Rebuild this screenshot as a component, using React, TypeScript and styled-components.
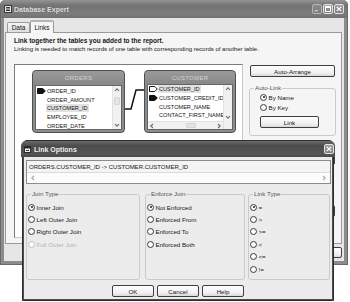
import React from "react";
import styled, { createGlobalStyle, css } from "styled-components";

const GlobalStyle = createGlobalStyle`
  html, body { margin: 0; padding: 0; background: #fff; }
  body { font-family: "Liberation Sans", Arial, sans-serif; font-size: 6.5px; color: #151515; }
  * { box-sizing: border-box; }
`;

const Stage = styled.div`
  position: relative;
  width: 350px;
  height: 302px;
  overflow: hidden;
  background: #fff;
`;

/* ---------- outer window ---------- */

const Window = styled.div`
  width: 348px;
  height: 265px;
  display: flex;
  flex-direction: column;
  background: #8c8c8c;
  padding: 0 3px 3px;
  border-radius: 5px 5px 0 0;
  border: 1px solid #6a6a6a;
  border-top: none;
`;

const TitleBar = styled.div<{ $active?: boolean }>`
  display: flex;
  align-items: center;
  gap: ${p => (p.$active ? 3 : 2)}px;
  margin: 0 -3px;
  padding: 0 ${p => (p.$active ? 1 : 3)}px 0 3px;
  height: ${p => (p.$active ? 16 : 18)}px;
  font-weight: bold;
  font-size: 7px;
  border-radius: 5px 5px 0 0;
  ${p =>
    p.$active
      ? css`
          color: #f6f6f6;
          background: linear-gradient(#6a6a6a, #4c4c4c 30%, #555 80%, #4a4a4a);
        `
      : css`
          color: #e2e2e2;
          background: linear-gradient(#949494, #747474 30%, #7c7c7c 80%, #707070);
        `}
`;

const TitleText = styled.span`
  flex: 1;
  white-space: nowrap;
  text-shadow: 0 0 1px rgba(0, 0, 0, 0.4);
`;

const CapButton = styled.div<{ $dim?: boolean }>`
  width: 10px;
  height: 10px;
  border: 1px solid #e4e4e4;
  border-radius: 2px;
  background: linear-gradient(#a0a0a0, #7c7c7c);
  display: flex;
  align-items: center;
  justify-content: center;
  opacity: ${p => (p.$dim ? 0.55 : 1)};
  & + & { margin-left: -1px; }
`;

const WinBody = styled.div`
  flex: 1;
  display: flex;
  flex-direction: column;
  background: #e6e6e6;
  padding: 2px 2px 0 1px;
`;

const TabRow = styled.div`
  display: flex;
  align-items: flex-end;
  height: 12px;
  margin-left: 2px;
  position: relative;
  z-index: 1;
`;

const Tab = styled.div<{ $active?: boolean }>`
  display: flex;
  align-items: center;
  justify-content: center;
  border: 1px solid #9a9a9a;
  border-bottom: none;
  border-radius: 2px 2px 0 0;
  font-size: 6.5px;
  ${p =>
    p.$active
      ? css`
          width: 24px;
          height: 13px;
          margin-bottom: -1px;
          background: #f6f6f6;
          border-top: 2px solid #b4b4b4;
        `
      : css`
          width: 23px;
          height: 10px;
          background: linear-gradient(#f4f4f4, #dedede);
        `}
`;

const TabPanel = styled.div`
  height: 212px;
  border: 1px solid #9a9a9a;
  background: #f5f5f5;
  padding: 3px 5px 0 8px;
  display: flex;
  flex-direction: column;
`;

const Intro = styled.div<{ $bold?: boolean }>`
  line-height: 9px;
  white-space: nowrap;
  font-weight: ${p => (p.$bold ? "bold" : "normal")};
  font-size: ${p => (p.$bold ? 6.5 : 6)}px;
`;

const MainRow = styled.div`
  display: flex;
  gap: 6px;
  margin-top: 10px;
`;

const Canvas = styled.div`
  position: relative;
  width: 232px;
  height: 174px;
  background: #fff;
  border: 1px solid #7c7c7c;
  border-right-color: #c8c8c8;
  border-bottom-color: #c8c8c8;
`;

const RightCol = styled.div`
  width: 87px;
  display: flex;
  flex-direction: column;
  padding-top: 1px;
`;

const Button = styled.div<{ $w: number; $h?: number; $mt?: number; $ml?: number }>`
  width: ${p => p.$w}px;
  height: ${p => p.$h ?? 12}px;
  margin-top: ${p => p.$mt ?? 0}px;
  margin-left: ${p => p.$ml ?? 0}px;
  border: 1px solid #3e3e3e;
  border-radius: 2px;
  background: linear-gradient(#fefefe, #f0f0f0 70%, #d8d8d8);
  display: flex;
  align-items: center;
  justify-content: center;
  font-size: 6.2px;
  white-space: nowrap;
  flex-shrink: 0;
`;

const Group = styled.fieldset<{ $w: number; $h: number; $ml?: number; $mt?: number; $pt?: number }>`
  width: ${p => p.$w}px;
  height: ${p => p.$h}px;
  margin: ${p => p.$mt ?? 0}px 0 0 ${p => p.$ml ?? 0}px;
  padding: ${p => p.$pt ?? 3}px 2px 0 1px;
  border: 1px solid #cacaca;
  border-radius: 3px;
  min-width: 0;
  flex-shrink: 0;
`;

const Legend = styled.legend`
  padding: 0 1px;
  margin-left: 3px;
  line-height: 8px;
  font-size: 6.2px;
  color: #555;
`;

const Indent = styled.div`
  padding-left: 9px;
`;

const RadioRow = styled.div<{ $h?: number; $disabled?: boolean }>`
  display: flex;
  align-items: center;
  height: ${p => p.$h ?? 12.4}px;
  line-height: 7px;
  white-space: nowrap;
  font-size: 6.2px;
  color: ${p => (p.$disabled ? "#b4b4b4" : "#151515")};
`;

const Dot = styled.span<{ $checked?: boolean; $disabled?: boolean }>`
  width: 7px;
  height: 7px;
  border-radius: 50%;
  border: 1px solid ${p => (p.$disabled ? "#c4c4c4" : "#404040")};
  background: radial-gradient(circle, #fff 40%, #e6e6e6);
  margin-right: 1.5px;
  position: relative;
  flex-shrink: 0;
  ${p =>
    p.$checked &&
    css`
      &::after {
        content: "";
        position: absolute;
        left: 1.5px;
        top: 1.5px;
        width: 2px;
        height: 2px;
        border-radius: 50%;
        background: #222;
      }
    `}
`;

const BottomRow = styled.div`
  display: flex;
  justify-content: flex-end;
  gap: 4px;
  margin-top: 3px;
`;

/* ---------- table nodes on the link canvas ---------- */

const Node = styled.div<{ $x: number; $w: number }>`
  position: absolute;
  left: ${p => p.$x}px;
  top: 5px;
  width: ${p => p.$w}px;
  height: 63px;
  border: 1px solid #505050;
  border-radius: 4px;
  background: linear-gradient(#9a9a9a, #8a8a8a 20%, #8c8c8c);
  display: flex;
  flex-direction: column;
  padding: 0 2px 2px;
`;

const NodeHead = styled.div<{ $h: number }>`
  height: ${p => p.$h}px;
  display: flex;
  align-items: center;
  justify-content: center;
  color: #d4d4d4;
  font-size: 6px;
  letter-spacing: 0.3px;
`;

const NodeBody = styled.div<{ $hscroll?: boolean }>`
  flex: 1;
  display: grid;
  grid-template-columns: 1fr 9px;
  grid-template-rows: ${p => (p.$hscroll ? "1fr 8px" : "1fr")};
  background: #fff;
  border: 1px solid #666;
  overflow: hidden;
  min-height: 0;
`;

const FieldList = styled.div<{ $pt: number }>`
  padding-top: ${p => p.$pt}px;
  overflow: hidden;
`;

const Field = styled.div`
  display: flex;
  align-items: center;
  height: 8.7px;
  font-size: 5.6px;
  white-space: nowrap;
`;

const KeySlot = styled.span`
  width: 10px;
  display: flex;
  align-items: center;
  padding-left: 0.5px;
  flex-shrink: 0;
`;

const FieldName = styled.span<{ $sel?: boolean }>`
  padding: 0 1px;
  line-height: 8px;
  background: ${p => (p.$sel ? "#e2e2e2" : "transparent")};
`;

const VScroll = styled.div`
  display: flex;
  flex-direction: column;
  background: #f1f1f1;
  border-left: 1px solid #e2e2e2;
`;

const HScroll = styled.div`
  display: flex;
  align-items: stretch;
  background: #f1f1f1;
  border-top: 1px solid #e2e2e2;
`;

const ArrowBtn = styled.div`
  width: 8px;
  height: 8px;
  display: flex;
  align-items: center;
  justify-content: center;
  flex-shrink: 0;
`;

const Thumb = styled.div<{ $horizontal?: boolean }>`
  ${p =>
    p.$horizontal
      ? css`
          width: 10px;
          margin: 1px 0 1px 30px;
        `
      : css`
          height: 8px;
          margin: 3px 1px 0;
        `}
  border: 1px solid #d4d4d4;
  border-radius: 1px;
  background: #e4e4e4;
`;

const Spacer = styled.div`
  flex: 1;
`;

const Link = styled.svg`
  position: absolute;
  left: 0;
  top: 0;
  pointer-events: none;
`;

/* ---------- Link Options dialog ---------- */

const Dialog = styled.div`
  position: absolute;
  left: 22px;
  top: 140px;
  width: 312px;
  height: 161px;
  border: 1px solid #2e2e2e;
  border-radius: 5px 5px 0 0;
  background: #4e4e4e;
  padding: 0 1px 1px;
  display: flex;
  flex-direction: column;
`;

const DialogBody = styled.div`
  flex: 1;
  background: #ececec;
  padding: 3px 2px 0 1px;
  display: flex;
  flex-direction: column;
`;

const ListBox = styled.div`
  width: 305px;
  height: 24px;
  margin-left: 1px;
  border: 1px solid #8c8c8c;
  display: flex;
  flex-direction: column;
  background: #f4f4f4;
`;

const ListLine = styled.div`
  height: 11px;
  padding-left: 2px;
  display: flex;
  align-items: center;
  font-size: 6px;
  white-space: nowrap;
`;

const ListScroll = styled.div`
  flex: 1;
  display: flex;
  align-items: center;
  justify-content: space-between;
  background: #fcfcfc;
  border-top: 1px solid #dadada;
  padding: 0 3px;
`;

const GroupsRow = styled.div`
  display: flex;
  margin-top: 6px;
  padding-left: 1px;
`;

const DialogButtons = styled.div`
  display: flex;
  justify-content: center;
  gap: 3px;
  margin-top: 5px;
  padding-left: 1px;
`;

/* ---------- small drawings ---------- */

const Chevron = ({ dir, color = "#6a6a6a" }: { dir: "up" | "down" | "left" | "right"; color?: string }) => {
  const pts = {
    up: "1,4 3,1.8 5,4",
    down: "1,2 3,4.2 5,2",
    left: "4,1 1.8,3 4,5",
    right: "2,1 4.2,3 2,5",
  }[dir];
  return (
    <svg width="6" height="6" viewBox="0 0 6 6">
      <polyline points={pts} fill="none" stroke={color} strokeWidth="1.1" />
    </svg>
  );
};

const KeyTag = ({ hollow }: { hollow?: boolean }) => (
  <svg width="9" height="6" viewBox="0 0 9 6">
    <polygon
      points="0.5,0.5 5.8,0.5 8.3,3 5.8,5.5 0.5,5.5"
      fill={hollow ? "#fff" : "#111"}
      stroke="#111"
      strokeWidth="1"
    />
  </svg>
);

const AppIcon = () => (
  <svg width="8" height="8" viewBox="0 0 8 8">
    <rect x="0.5" y="0.5" width="7" height="7" fill="#e8e8e8" stroke="#3a3a3a" />
    <rect x="2" y="2" width="4" height="1.5" fill="#3a3a3a" />
    <rect x="2" y="4.5" width="4" height="1.5" fill="#3a3a3a" />
  </svg>
);

const DialogIcon = () => (
  <svg width="7" height="7" viewBox="0 0 7 7">
    <rect x="0.5" y="0.5" width="6" height="6" fill="#f2f2f2" stroke="#2a2a2a" />
    <rect x="0.5" y="0.5" width="6" height="2" fill="#2a2a2a" />
    <rect x="2" y="4" width="3" height="1" fill="#2a2a2a" />
  </svg>
);

const CloseGlyph = () => (
  <svg width="6" height="6" viewBox="0 0 6 6">
    <path d="M0.8 0.8 L5.2 5.2 M5.2 0.8 L0.8 5.2" stroke="#fff" strokeWidth="1.2" />
  </svg>
);

const MaxGlyph = () => (
  <svg width="6" height="6" viewBox="0 0 6 6">
    <rect x="0.5" y="0.5" width="5" height="5" fill="none" stroke="#fff" strokeWidth="1" />
    <rect x="0.5" y="0.5" width="5" height="1.5" fill="#fff" />
  </svg>
);

const MinGlyph = () => (
  <svg width="6" height="6" viewBox="0 0 6 6">
    <rect x="0.5" y="4" width="3.5" height="1.4" fill="#fff" />
  </svg>
);

/* ---------- data ---------- */

type Col = { name: string; key?: "solid" | "hollow"; sel?: boolean };

const orders: Col[] = [
  { name: "ORDER_ID", key: "solid" },
  { name: "ORDER_AMOUNT" },
  { name: "CUSTOMER_ID", sel: true },
  { name: "EMPLOYEE_ID" },
  { name: "ORDER_DATE" },
];

const customer: Col[] = [
  { name: "CUSTOMER_ID", key: "hollow", sel: true },
  { name: "CUSTOMER_CREDIT_ID", key: "solid" },
  { name: "CUSTOMER_NAME" },
  { name: "CONTACT_FIRST_NAME" },
];

type Opt = { label: string; checked?: boolean; disabled?: boolean };

const joinTypes: Opt[] = [
  { label: "Inner Join", checked: true },
  { label: "Left Outer Join" },
  { label: "Right Outer Join" },
  { label: "Full Outer Join", disabled: true },
];

const enforce: Opt[] = [
  { label: "Not Enforced", checked: true },
  { label: "Enforced From" },
  { label: "Enforced To" },
  { label: "Enforced Both" },
];

const linkTypes: Opt[] = [
  { label: "=", checked: true },
  { label: ">" },
  { label: ">=" },
  { label: "<" },
  { label: "<=" },
  { label: "!=" },
];

const RadioList = ({ items, h }: { items: Opt[]; h?: number }) => (
  <>
    {items.map(o => (
      <RadioRow key={o.label} $h={h} $disabled={o.disabled}>
        <Dot $checked={o.checked} $disabled={o.disabled} />
        {o.label}
      </RadioRow>
    ))}
  </>
);

const Fields = ({ cols, pt }: { cols: Col[]; pt: number }) => (
  <FieldList $pt={pt}>
    {cols.map(c => (
      <Field key={c.name}>
        <KeySlot>{c.key && <KeyTag hollow={c.key === "hollow"} />}</KeySlot>
        <FieldName $sel={c.sel}>{c.name}</FieldName>
      </Field>
    ))}
  </FieldList>
);

export default function App() {
  return (
    <Stage>
      <GlobalStyle />
      <Window>
        <TitleBar>
          <AppIcon />
          <TitleText>Database Expert</TitleText>
          <CapButton $dim>
            <MinGlyph />
          </CapButton>
          <CapButton>
            <MaxGlyph />
          </CapButton>
          <CapButton>
            <CloseGlyph />
          </CapButton>
        </TitleBar>
        <WinBody>
          <TabRow>
            <Tab>Data</Tab>
            <Tab $active>Links</Tab>
          </TabRow>
          <TabPanel>
            <Intro $bold>Link together the tables you added to the report.</Intro>
            <Intro>
              Linking is needed to match records of one table with corresponding records of another table.
            </Intro>
            <MainRow>
              <Canvas>
                <Node $x={17} $w={93}>
                  <NodeHead $h={14}>ORDERS</NodeHead>
                  <NodeBody>
                    <Fields cols={orders} pt={0.5} />
                    <VScroll>
                      <ArrowBtn>
                        <Chevron dir="up" />
                      </ArrowBtn>
                      <Thumb />
                      <Spacer />
                      <ArrowBtn>
                        <Chevron dir="down" />
                      </ArrowBtn>
                    </VScroll>
                  </NodeBody>
                </Node>
                <Node $x={129} $w={92}>
                  <NodeHead $h={13}>CUSTOMER</NodeHead>
                  <NodeBody $hscroll>
                    <Fields cols={customer} pt={0} />
                    <VScroll>
                      <ArrowBtn>
                        <Chevron dir="up" />
                      </ArrowBtn>
                      <Spacer />
                      <ArrowBtn>
                        <Chevron dir="down" />
                      </ArrowBtn>
                    </VScroll>
                    <HScroll>
                      <ArrowBtn>
                        <Chevron dir="left" />
                      </ArrowBtn>
                      <Thumb $horizontal />
                      <Spacer />
                      <ArrowBtn>
                        <Chevron dir="right" />
                      </ArrowBtn>
                    </HScroll>
                    <VScroll />
                  </NodeBody>
                </Node>
                <Link width="232" height="172" viewBox="0 0 232 172">
                  <polyline points="110,44 116,44 121,25 129,25" fill="none" stroke="#111" strokeWidth="1.5" />
                </Link>
              </Canvas>
              <RightCol>
                <Button $w={85} $ml={1}>
                  Auto-Arrange
                </Button>
                <Group $w={87} $h={52} $mt={7} $pt={0}>
                  <Legend>Auto-Link</Legend>
                  <Indent>
                    <RadioRow $h={10.5}>
                      <Dot $checked />
                      By Name
                    </RadioRow>
                    <RadioRow $h={10.5}>
                      <Dot />
                      By Key
                    </RadioRow>
                    <Button $w={59} $h={12} $mt={3}>
                      Link
                    </Button>
                  </Indent>
                </Group>
                <Button $w={85} $ml={1} $mt={17}>
                  Clear Links
                </Button>
                <Button $w={85} $ml={1} $mt={40}>
                  Index Legend...
                </Button>
              </RightCol>
            </MainRow>
          </TabPanel>
          <BottomRow>
            <Button $w={44} $h={11}>OK</Button>
            <Button $w={44} $h={11}>Cancel</Button>
            <Button $w={44} $h={11}>Help</Button>
          </BottomRow>
        </WinBody>
      </Window>

      <Dialog>
        <TitleBar $active>
          <DialogIcon />
          <TitleText>Link Options</TitleText>
          <CapButton>
            <CloseGlyph />
          </CapButton>
        </TitleBar>
        <DialogBody>
          <ListBox>
            <ListLine>ORDERS.CUSTOMER_ID -&gt; CUSTOMER.CUSTOMER_ID</ListLine>
            <ListScroll>
              <Chevron dir="left" color="#a8a8a8" />
              <Chevron dir="right" color="#a8a8a8" />
            </ListScroll>
          </ListBox>
          <GroupsRow>
            <Group $w={114} $h={90}>
              <Legend>Join Type</Legend>
              <RadioList items={joinTypes} />
            </Group>
            <Group $w={100} $h={90} $ml={5}>
              <Legend>Enforce Join</Legend>
              <RadioList items={enforce} />
            </Group>
            <Group $w={82} $h={90} $ml={3}>
              <Legend>Link Type</Legend>
              <RadioList items={linkTypes} />
            </Group>
          </GroupsRow>
          <DialogButtons>
            <Button $w={42}>OK</Button>
            <Button $w={42}>Cancel</Button>
            <Button $w={42}>Help</Button>
          </DialogButtons>
        </DialogBody>
      </Dialog>
    </Stage>
  );
}
